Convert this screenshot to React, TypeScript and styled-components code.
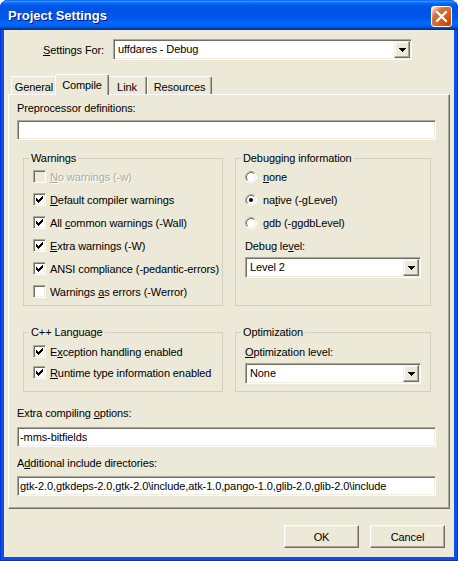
import styled, { createGlobalStyle } from "styled-components";

const GlobalStyle = createGlobalStyle`
  html, body {
    margin: 0;
    padding: 0;
    background: #ffffff;
  }
  body {
    font-family: "Liberation Sans", Arial, sans-serif;
    font-size: 11px;
    letter-spacing: -0.1px;
    color: #000000;
  }
  * {
    box-sizing: border-box;
  }
`;

const face = "#ECE9D8";
const shadow = "#ACA899";
const dark = "#716F64";
const light = "#F1EFE2";

const CheckMark = () => (
    <svg width="13" height="13" viewBox="0 0 13 13" shapeRendering="crispEdges">
        <path
            fill="#000"
            d="M9 3h1v1h-1z M8 4h2v1h-2z M3 5h1v1h-1z M7 5h3v1h-3z M3 6h2v1h-2z M6 6h3v1h-3z M3 7h5v1h-5z M4 8h3v1h-3z M5 9h1v1h-1z"
        />
    </svg>
);

const Checkbox = ({checked, disabled}: { checked?: boolean; disabled?: boolean }) => (
    <CheckBox $disabled={disabled}>{checked && <CheckMark/>}</CheckBox>
);

const Radio = ({checked}: { checked?: boolean }) => (
    <svg width="12" height="12" viewBox="0 0 12 12">
        <circle cx="6" cy="6" r="5" fill="#fff"/>
        <path d="M2.11 9.89 A5.5 5.5 0 0 1 9.89 2.11" fill="none" stroke={shadow} strokeWidth="1"/>
        <path d="M9.89 2.11 A5.5 5.5 0 0 1 2.11 9.89" fill="none" stroke="#fff" strokeWidth="1"/>
        <path d="M2.82 9.18 A4.5 4.5 0 0 1 9.18 2.82" fill="none" stroke={dark} strokeWidth="1"/>
        <path d="M9.18 2.82 A4.5 4.5 0 0 1 2.82 9.18" fill="none" stroke={light} strokeWidth="1"/>
        {checked && <circle cx="6" cy="6" r="2" fill="#000"/>}
    </svg>
);

const ComboBox = ({value, width}: { value: string; width: number }) => (
    <Combo $width={width}>
        <ComboText>{value}</ComboText>
        <DropButton>
            <svg width="7" height="4" viewBox="0 0 7 4" shapeRendering="crispEdges">
                <path d="M0 0h7v1h-7z M1 1h5v1h-5z M2 2h3v1h-3z M3 3h1v1h-1z" fill="#000"/>
            </svg>
        </DropButton>
    </Combo>
);

const tabs = [
    {label: "General", width: 46},
    {label: "Compile", width: 50, active: true},
    {label: "Link", width: 40},
    {label: "Resources", width: 65},
];

export default function App() {
    return (
        <>
            <GlobalStyle/>
            <Window>
                <TitleBar>
                    <Title>Project Settings</Title>
                    <CloseButton>
                        <svg width="19" height="19" viewBox="0 0 19 19">
                            <path d="M5 5 L14 14 M14 5 L5 14" stroke="#fff" strokeWidth="2.4" strokeLinecap="round"/>
                        </svg>
                    </CloseButton>
                </TitleBar>
                <Client>
                    <SettingsRow>
                        <span><Key>S</Key>ettings For:</span>
                        <ComboBox value="uffdares - Debug" width={299}/>
                    </SettingsRow>

                    <TabStrip>
                        {tabs.map(tab => (
                            <Tab key={tab.label} $width={tab.width} $active={tab.active}>{tab.label}</Tab>
                        ))}
                    </TabStrip>

                    <TabPanel>
                        <FieldLabel>Preprocessor definitions:</FieldLabel>
                        <Field $gap={5}></Field>

                        <GroupRow $gap={12}>
                            <Group>
                                <Legend>Warnings</Legend>
                                <CheckRow $height={23} $disabled>
                                    <Checkbox disabled/>
                                    <span><Key>N</Key>o warnings (-w)</span>
                                </CheckRow>
                                <CheckRow $height={23}>
                                    <Checkbox checked/>
                                    <span><Key>D</Key>efault compiler warnings</span>
                                </CheckRow>
                                <CheckRow $height={23}>
                                    <Checkbox checked/>
                                    <span>All <Key>c</Key>ommon warnings (-Wall)</span>
                                </CheckRow>
                                <CheckRow $height={23}>
                                    <Checkbox checked/>
                                    <span><Key>E</Key>xtra warnings (-W)</span>
                                </CheckRow>
                                <CheckRow $height={23}>
                                    <Checkbox checked/>
                                    <span>ANSI compliance (-pedantic-errors)</span>
                                </CheckRow>
                                <CheckRow $height={23}>
                                    <Checkbox/>
                                    <span>Warnings <Key>a</Key>s errors (-Werror)</span>
                                </CheckRow>
                            </Group>
                            <Group>
                                <Legend>Debugging information</Legend>
                                <RadioRow>
                                    <Radio/>
                                    <span><Key>n</Key>one</span>
                                </RadioRow>
                                <RadioRow>
                                    <Radio checked/>
                                    <span>na<Key>t</Key>ive (-gLevel)</span>
                                </RadioRow>
                                <RadioRow>
                                    <Radio/>
                                    <span><Key>g</Key>db (-ggdbLevel)</span>
                                </RadioRow>
                                <GroupLabel $height={23}>Debug le<Key>v</Key>el:</GroupLabel>
                                <ComboBox value="Level 2" width={176}/>
                            </Group>
                        </GroupRow>

                        <GroupRow $gap={20}>
                            <Group $padTop={2} $padBottom={8}>
                                <Legend>C++ Language</Legend>
                                <CheckRow $height={21}>
                                    <Checkbox checked/>
                                    <span>E<Key>x</Key>ception handling enabled</span>
                                </CheckRow>
                                <CheckRow $height={21}>
                                    <Checkbox checked/>
                                    <span><Key>R</Key>untime type information enabled</span>
                                </CheckRow>
                            </Group>
                            <Group $padTop={2} $padBottom={7}>
                                <Legend>Optimization</Legend>
                                <GroupLabel $height={22}><Key>O</Key>ptimization level:</GroupLabel>
                                <ComboBox value="None" width={176}/>
                            </Group>
                        </GroupRow>

                        <FieldLabel $gap={15}>Extra compiling <Key>o</Key>ptions:</FieldLabel>
                        <Field $gap={7}>-mms-bitfields</Field>

                        <FieldLabel $gap={10}>A<Key>d</Key>ditional include directories:</FieldLabel>
                        <Field $gap={6}>gtk-2.0,gtkdeps-2.0,gtk-2.0\include,atk-1.0,pango-1.0,glib-2.0,glib-2.0\include</Field>
                    </TabPanel>

                    <ButtonRow>
                        <PushButton>OK</PushButton>
                        <PushButton>Cancel</PushButton>
                    </ButtonRow>
                </Client>
            </Window>
        </>
    );
}

const Window = styled.div`
  width: 458px;
  height: 561px;
  display: flex;
  flex-direction: column;
  background: #0B52E4;
  border-radius: 8px 8px 0 0;
  box-shadow: inset 1px 0 0 #0831D9, inset -1px 0 0 #0831D9, inset 0 -1px 0 #0831D9;
  overflow: hidden;
`

const TitleBar = styled.div`
  height: 30px;
  flex-shrink: 0;
  display: flex;
  align-items: center;
  justify-content: space-between;
  padding: 0 6px 0 8px;
  background: linear-gradient(180deg, #0058EE 0%, #3593FF 4%, #288EFF 6%, #127DFF 8%, #036FFC 10%, #0262EE 14%, #0057E5 20%, #0054E3 24%, #0055EB 56%, #005BF5 66%, #026AFE 76%, #0062EF 86%, #0052D6 92%, #0040AB 94%, #003092 100%);
`

const Title = styled.div`
  color: #ffffff;
  font-family: "Liberation Sans", Arial, sans-serif;
  font-weight: bold;
  font-size: 13px;
  letter-spacing: 0;
  text-shadow: 1px 1px 0 #0F1089;
  padding-top: 1px;
`

const CloseButton = styled.div`
  width: 21px;
  height: 21px;
  margin-top: 2px;
  border: 1px solid #ffffff;
  border-radius: 3px;
  display: flex;
  align-items: center;
  justify-content: center;
  background: radial-gradient(circle at 90% 90%, #cc4600 0%, #dc6527 55%, #cd7546 70%, #ffccb2 90%, #ffffff 100%);
`

const Client = styled.div`
  flex: 1;
  margin: 0 4px 4px;
  background: ${face};
  display: flex;
  flex-direction: column;
`

const Key = styled.span`
  text-decoration: underline;
`

const SettingsRow = styled.div`
  display: flex;
  align-items: center;
  gap: 9px;
  padding: 9px 0 0 39px;
`

const Combo = styled.div<{ $width: number }>`
  width: ${p => p.$width}px;
  height: 21px;
  display: flex;
  align-items: center;
  background: #ffffff;
  border: 1px solid;
  border-color: ${shadow} #ffffff #ffffff ${shadow};
  box-shadow: inset 1px 1px 0 ${dark}, inset -1px -1px 0 ${light};
  padding: 1px;
`

const ComboText = styled.div`
  flex: 1;
  padding-left: 3px;
  line-height: 17px;
  white-space: nowrap;
`

const DropButton = styled.div`
  width: 16px;
  height: 17px;
  display: flex;
  align-items: center;
  justify-content: center;
  background: ${face};
  border: 1px solid;
  border-color: ${light} ${dark} ${dark} ${light};
  box-shadow: inset -1px -1px 0 ${shadow}, inset 1px 1px 0 #ffffff;
`

const TabStrip = styled.div`
  display: flex;
  align-items: flex-end;
  height: 20px;
  margin: 14px 4px 0;
  padding-left: 3px;
  position: relative;
  z-index: 1;
`

const Tab = styled.div<{ $width: number; $active?: boolean }>`
  width: ${p => p.$width + (p.$active ? 4 : 0)}px;
  height: ${p => (p.$active ? 21 : 18)}px;
  margin: ${p => (p.$active ? "0 -2px -1px" : "0")};
  padding-top: 4px;
  text-align: center;
  line-height: 13px;
  background: ${face};
  border-top: 1px solid #ffffff;
  border-left: 1px solid #ffffff;
  border-right: 1px solid ${dark};
  border-radius: 2px 2px 0 0;
  box-shadow: inset -1px 0 0 ${shadow};
  position: relative;
  z-index: ${p => (p.$active ? 2 : 0)};
`

const TabPanel = styled.div`
  height: 415px;
  margin: 0 4px;
  display: flex;
  flex-direction: column;
  padding: 7px 13px 0 8px;
  border: 1px solid;
  border-color: #ffffff ${dark} ${dark} #ffffff;
  box-shadow: inset -1px -1px 0 ${shadow};
`

const FieldLabel = styled.div<{ $gap?: number }>`
  line-height: 13px;
  margin-top: ${p => p.$gap ?? 0}px;
`

const Field = styled.div<{ $gap: number }>`
  height: 20px;
  margin-top: ${p => p.$gap}px;
  background: #ffffff;
  border: 1px solid;
  border-color: ${shadow} #ffffff #ffffff ${shadow};
  box-shadow: inset 1px 1px 0 ${dark}, inset -1px -1px 0 ${light};
  padding: 1px 0 0 2px;
  line-height: 16px;
  white-space: nowrap;
  overflow: hidden;
`

const GroupRow = styled.div<{ $gap: number }>`
  display: grid;
  grid-template-columns: 200px 196px;
  column-gap: 12px;
  margin: ${p => p.$gap}px 6px 0;
`

const Group = styled.fieldset<{ $padTop?: number; $padBottom?: number }>`
  margin: 0;
  min-width: 0;
  padding: ${p => p.$padTop ?? 0}px 8px ${p => p.$padBottom ?? 2}px 9px;
  border: 1px solid #D0D0BF;
  display: flex;
  flex-direction: column;
`

const Legend = styled.legend`
  padding: 0 2px;
  margin-left: -4px;
  line-height: 13px;
`

const CheckRow = styled.div<{ $height: number; $disabled?: boolean }>`
  display: flex;
  align-items: center;
  gap: 4px;
  height: ${p => p.$height}px;
  white-space: nowrap;
  color: ${p => (p.$disabled ? shadow : "#000")};
  text-shadow: ${p => (p.$disabled ? "1px 1px 0 #ffffff" : "none")};
`

const CheckBox = styled.div<{ $disabled?: boolean }>`
  width: 13px;
  height: 13px;
  flex-shrink: 0;
  background: ${p => (p.$disabled ? face : "#ffffff")};
  border: 1px solid;
  border-color: ${shadow} #ffffff #ffffff ${shadow};
  box-shadow: inset 1px 1px 0 ${dark}, inset -1px -1px 0 ${light};
  position: relative;

  svg {
    position: absolute;
    left: -1px;
    top: -1px;
  }
`

const RadioRow = styled.div`
  display: flex;
  align-items: center;
  gap: 6px;
  height: 23px;
  white-space: nowrap;
`

const GroupLabel = styled.div<{ $height: number }>`
  height: ${p => p.$height}px;
  display: flex;
  align-items: center;
  white-space: nowrap;
`

const ButtonRow = styled.div`
  display: flex;
  justify-content: flex-end;
  gap: 11px;
  margin-top: 16px;
  padding-right: 9px;
`

const PushButton = styled.div`
  width: 75px;
  height: 23px;
  display: flex;
  align-items: center;
  justify-content: center;
  background: ${face};
  border: 1px solid;
  border-color: #ffffff ${dark} ${dark} #ffffff;
  box-shadow: inset -1px -1px 0 ${shadow}, inset 1px 1px 0 ${light};
`
